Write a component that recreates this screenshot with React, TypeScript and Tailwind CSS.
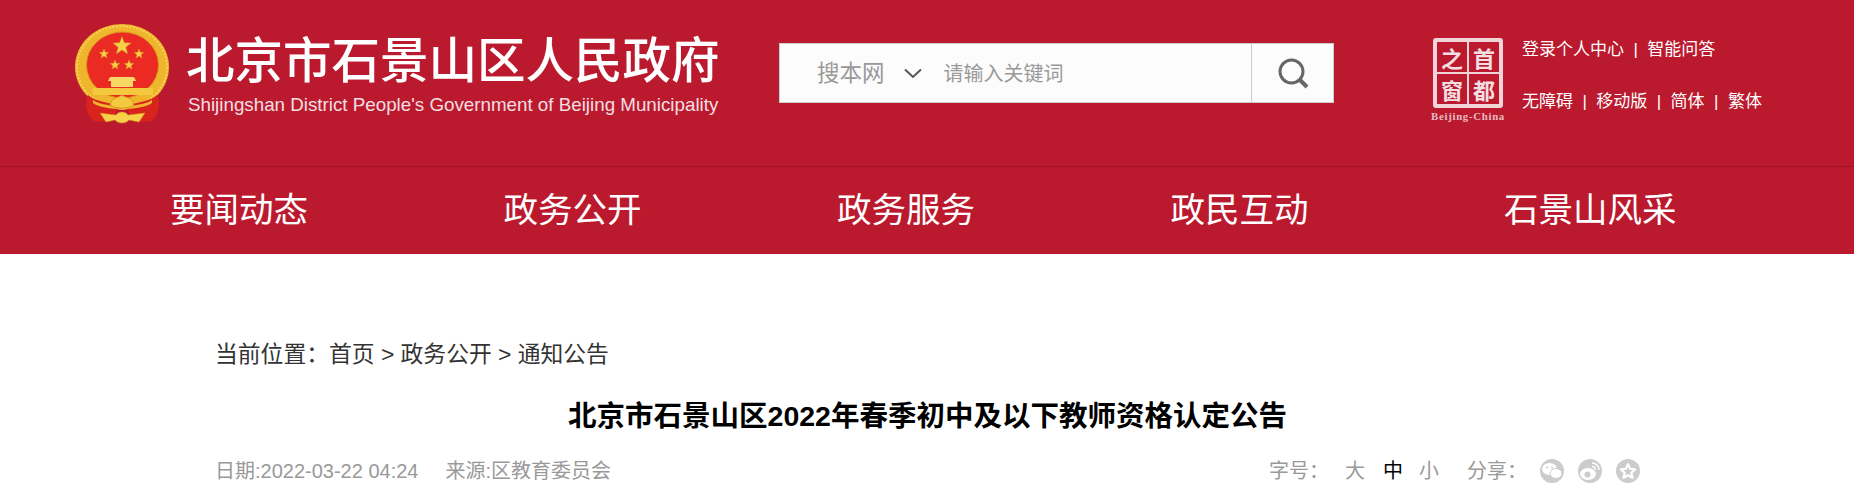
import React from "react";

const cjk = { fontFamily: '"Liberation Sans", "Noto Sans CJK SC", sans-serif' };

const navItems = ["要闻动态", "政务公开", "政务服务", "政民互动", "石景山风采"];

// full width colon
const colon = "\uFF1A";

function Star({ cx, cy, r }: { cx: number; cy: number; r: number }) {
  const pts: string[] = [];
  for (let i = 0; i < 10; i++) {
    const rad = i % 2 === 0 ? r : r * 0.42;
    const a = (Math.PI / 5) * i - Math.PI / 2;
    pts.push(`${cx + rad * Math.cos(a)},${cy + rad * Math.sin(a)}`);
  }
  return <polygon points={pts.join(" ")} fill="#f7d04a" stroke="#d99a1e" strokeWidth="0.5" />;
}

function Emblem() {
  return (
    <svg width="96" height="100" viewBox="0 0 96 100" className="shrink-0">
      <ellipse cx="48" cy="43" rx="47" ry="43" fill="#efb52c" />
      <ellipse cx="48" cy="43" rx="45" ry="41" fill="none" stroke="#f8d458" strokeWidth="2" strokeDasharray="2 1.5" />
      <ellipse cx="48.5" cy="41" rx="36" ry="33" fill="#ec2a24" stroke="#d8921c" strokeWidth="1" />
      <Star cx={48} cy={22} r={9.5} />
      <Star cx={30} cy={30} r={5} />
      <Star cx={65} cy={30} r={5} />
      <Star cx={41} cy={41} r={5} />
      <Star cx={55} cy={41} r={5} />
      <path d="M36 53 H60 L62 57 H59 V63 H37 V57 H34 Z" fill="#f9d765" />
      <rect x="19" y="64" width="60" height="7" fill="#f5c93f" />
      <path d="M14 71 C10 78 12 92 20 97 L36 98 L46 82 L30 78 C22 76 17 74 14 71 Z" fill="#d9241d" />
      <path d="M83 71 C87 78 85 92 77 97 L61 98 L51 82 L67 78 C75 76 80 74 83 71 Z" fill="#d9241d" />
      <path d="M19 76 C30 84 66 84 78 76 L78 79 C66 87 30 87 19 79 Z" fill="#efb52c" />
      <path d="M36 81 C38 73 44 74 48 71 C52 74 58 73 60 81 C55 85 41 85 36 81 Z" fill="#f5c93f" stroke="#c9851a" strokeWidth="0.6" />
      <path d="M26 89 L42 91 C44 87 52 87 54 91 L71 89 L65 98 L55 96 C52 100 44 100 41 96 L32 98 Z" fill="#f7d04a" stroke="#cc8a1c" strokeWidth="0.5" />
    </svg>
  );
}

function BeijingLogo() {
  return (
    <div className="flex flex-col items-center w-[78px] shrink-0 mt-[38px]">
      <div className="grid grid-cols-2 w-[70px] h-[70px] bg-[#f0d4d8] rounded-[3px] p-[4px] gap-[2px]">
        {["之", "首", "窗", "都"].map((c) => (
          <div
            key={c}
            className="flex items-center justify-center bg-[#bb1a2e] text-[#f3dfe1] text-[22px] leading-none font-bold"
            style={{ fontFamily: '"Noto Sans CJK SC", serif' }}
          >
            {c}
          </div>
        ))}
      </div>
      <span className="text-[10.8px] leading-[12px] mt-[2px] text-[#e6bcc1] font-bold tracking-[0.7px] whitespace-nowrap font-['Liberation_Serif']">
        Beijing-China
      </span>
    </div>
  );
}

function App() {
  return (
    <div className="w-full h-[498px] overflow-hidden bg-white" style={cjk}>
      <div className="bg-[#bb1a2e] h-[254px]">
        <div className="flex h-[167px] border-b border-[#9c1526]">
          <div className="flex ml-[74px] w-[660px] mt-[24px]">
            <Emblem />
            <div className="ml-[16px] mt-[6px] text-white">
              <h1 className="text-[48.5px] leading-[54px] whitespace-nowrap" style={{ fontFamily: '"Noto Sans CJK SC", sans-serif', fontWeight: 500 }}>
                北京市石景山区人民政府
              </h1>
              <p className="text-[18.77px] leading-[22px] mt-[10px] ml-[2px] whitespace-nowrap text-[#f4dfe2] font-['Liberation_Sans']">
                Shijingshan District People's Government of Beijing Municipality
              </p>
            </div>
          </div>

          <div className="flex ml-[45px] mt-[43px] w-[555px] h-[60px] bg-[#fcfcfc] border border-[#cccccc] shrink-0">
            <div className="flex flex-1 items-center pl-[37px] pt-[1px]">
              <span className="text-[22.5px] text-[#999999]">搜本网</span>
              <svg width="18" height="11" viewBox="0 0 18 11" className="ml-[19px]" fill="none" stroke="#555555" strokeWidth="2">
                <path d="M1 1.5 L9 9 L17 1.5" />
              </svg>
              <span className="ml-[22px] text-[20px] text-[#999999]">请输入关键词</span>
            </div>
            <div className="flex items-center justify-center w-[82px] border-l border-[#cccccc]">
              <svg width="32" height="32" viewBox="0 0 32 32" fill="none" stroke="#666666">
                <circle cx="14.5" cy="14.5" r="11.5" strokeWidth="3" />
                <path d="M23 23 L30 30" strokeWidth="4" />
              </svg>
            </div>
          </div>

          <div className="flex ml-[95px]">
            <BeijingLogo />
            <div className="ml-[15px] mt-[37px] text-white text-[17px] whitespace-nowrap">
              <div className="leading-[26px]">登录个人中心&nbsp;&nbsp;|&nbsp;&nbsp;智能问答</div>
              <div className="leading-[26px] mt-[26px]">无障碍&nbsp;&nbsp;|&nbsp;&nbsp;移动版&nbsp;&nbsp;|&nbsp;&nbsp;简体&nbsp;&nbsp;|&nbsp;&nbsp;繁体</div>
            </div>
          </div>
        </div>

        <div className="flex items-center h-[87px] pl-[170px] gap-[195.5px] text-white text-[34.5px]">
          {navItems.map((item) => (
            <a key={item} className="whitespace-nowrap">{item}</a>
          ))}
        </div>
      </div>

      <div className="w-[1425px] ml-[215px]">
        <div className="mt-[85px] text-[22.8px] leading-[30px] text-[#333333]">
          当前位置{colon}首页 &gt; 政务公开 &gt; 通知公告
        </div>
        <h2 className="mt-[27px] text-center text-[28.5px] leading-[40px] font-bold text-black">
          北京市石景山区2022年春季初中及以下教师资格认定公告
        </h2>
        <div className="flex items-center justify-between mt-[20px] h-[30px] text-[20px] text-[#999999]">
          <div className="flex gap-[27px]">
            <span>日期:2022-03-22 04:24</span>
            <span>来源:区教育委员会</span>
          </div>
          <div className="flex items-center">
            <span>字号{colon}</span>
            <span className="ml-[16px]">大</span>
            <span className="ml-[18px] text-black">中</span>
            <span className="ml-[16px]">小</span>
            <span className="ml-[28px]">分享{colon}</span>
            <div className="ml-[13px] flex gap-[14px]">
              <div className="flex items-center justify-center w-[24px] h-[24px] rounded-full bg-[#cccccc]">
                <svg width="22" height="18" viewBox="0 0 22 18" fill="#ffffff">
                  <ellipse cx="8.5" cy="7" rx="7.5" ry="6" />
                  <ellipse cx="15" cy="11.5" rx="6" ry="5" stroke="#cccccc" />
                  <circle cx="6" cy="5.5" r="1" fill="#cccccc" />
                  <circle cx="11" cy="5.5" r="1" fill="#cccccc" />
                </svg>
              </div>
              <div className="flex items-center justify-center w-[24px] h-[24px] rounded-full bg-[#cccccc]">
                <svg width="22" height="20" viewBox="0 0 22 20" fill="none">
                  <ellipse cx="9" cy="13" rx="8" ry="6" fill="#ffffff" />
                  <circle cx="8.5" cy="13.5" r="3" fill="#cccccc" />
                  <path d="M13 2 A7 7 0 0 1 20 9" stroke="#ffffff" strokeWidth="1.6" />
                  <path d="M13 5.5 A3.5 3.5 0 0 1 16.5 9" stroke="#ffffff" strokeWidth="1.6" />
                </svg>
              </div>
              <div className="flex items-center justify-center w-[24px] h-[24px] rounded-full bg-[#cccccc]">
                <svg width="18" height="18" viewBox="0 0 24 24" fill="none" stroke="#ffffff" strokeWidth="3" strokeLinejoin="round">
                  <path d="M12 3 L14.8 9 L21.5 9.8 L16.5 14.3 L17.9 21 L12 17.6 L6.1 21 L7.5 14.3 L2.5 9.8 L9.2 9 Z" />
                </svg>
              </div>
            </div>
          </div>
        </div>
      </div>
    </div>
  );
}

export default App;
